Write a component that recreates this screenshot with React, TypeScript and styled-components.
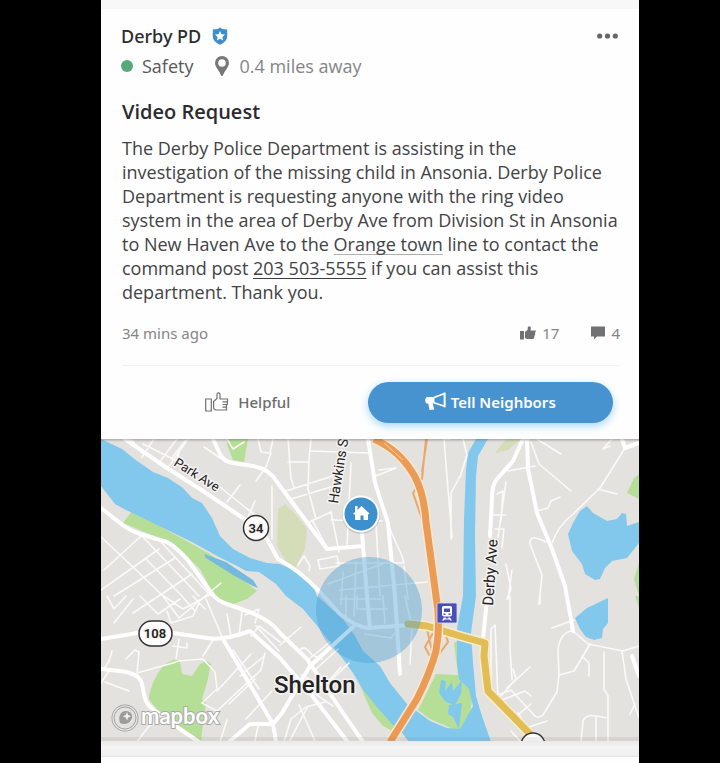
import React from "react";
import styled, { createGlobalStyle } from "styled-components";

const GlobalStyle = createGlobalStyle`
  * { box-sizing: border-box; }
  body {
    margin: 0;
    background: #000;
    font-family: "Open Sans", "Noto Sans", sans-serif;
    color: #434345;
  }
  button { font: inherit; border: 0; background: none; padding: 0; cursor: pointer; }
`;

const Page = styled.div`
  min-height: 100vh;
  display: flex;
  padding: 0 81px 0 101px;
`;

const Feed = styled.main`
  flex: 1;
  min-width: 0;
  display: flex;
  flex-direction: column;
  background: #fefefe;
`;

const Gap = styled.div<{ $size: number; $lower?: boolean }>`
  height: ${(p) => p.$size}px;
  background: ${(p) => (p.$lower ? "linear-gradient(#e9e9e9, #f4f4f4 40%, #f0f0f0)" : "#f8f8f8")};
  border-bottom: ${(p) => (p.$lower ? "1px solid #e4e4e4" : "0")};
`;

const Post = styled.article`
  display: flex;
  flex-direction: column;
  padding: 15px 19px 16px 20px;
`;

const Row = styled.div`
  display: flex;
  align-items: center;
`;

const Header = styled(Row)`
  height: 24px;
  justify-content: space-between;
`;

const Author = styled(Row)`
  gap: 11px;
  font-family: "Noto Sans", sans-serif;
  font-size: 18px;
  line-height: 24px;
  font-weight: 500;
  color: #2b2b2d;
`;

const MoreButton = styled.button`
  display: flex;
  padding: 8px 2px;
`;

const Details = styled(Row)`
  height: 24px;
  margin-top: 6px;
  font-size: 18px;
  line-height: 24px;
  color: #858587;
`;

const Dot = styled.span`
  width: 12px;
  height: 12px;
  margin-right: 9px;
  border-radius: 50%;
  background: #57aa78;
`;

const Category = styled.span`
  margin-right: 22px;
  color: #58585a;
`;

const Distance = styled(Row)`
  gap: 10px;
`;

const Content = styled.div`
  padding-left: 1px;
`;

const Title = styled.h1`
  margin: 20px 0 0;
  font-size: 20px;
  line-height: 28px;
  font-weight: 600;
  color: #2b2b2d;
`;

const Message = styled.p`
  margin: 10px 0 0;
  font-size: 18px;
  line-height: 24px;
  white-space: nowrap;
`;

const TextLink = styled.a<{ $soft?: boolean }>`
  color: inherit;
  text-decoration: underline;
  text-decoration-thickness: 1px;
  text-decoration-color: ${(p) => (p.$soft ? "#b0b0b0" : "#3c3c3e")};
  text-underline-offset: 3px;
  text-decoration-skip-ink: none;
`;

const Meta = styled(Row)`
  height: 24px;
  margin-top: 17px;
  justify-content: space-between;
  font-family: "Noto Sans", sans-serif;
  font-size: 15px;
  color: #858587;
`;

const Counts = styled(Row)`
  gap: 32px;
`;

const Count = styled(Row)`
  gap: 6px;
`;

const Actions = styled.div`
  display: grid;
  grid-template-columns: 1fr 1fr;
  margin-top: 20px;
  padding: 16px 7px 0 0;
  border-top: 1px solid #f2f2f2;
`;

const ActionButton = styled.button<{ $primary?: boolean }>`
  display: flex;
  align-items: center;
  justify-content: center;
  gap: ${(p) => (p.$primary ? 5 : 9)}px;
  height: 41px;
  border-radius: 21px;
  && {
    padding: 0 0 2px ${(p) => (p.$primary ? 0 : 6)}px;
    font-family: "Noto Sans", sans-serif;
    font-size: 15px;
    font-weight: ${(p) => (p.$primary ? 600 : 500)};
    color: ${(p) => (p.$primary ? "#fff" : "#6c6c6e")};
    background: ${(p) => (p.$primary ? "#4793d0" : "transparent")};
  }
  box-shadow: ${(p) => (p.$primary ? "0 3px 9px #a5d6f5" : "none")};
`;

const MapView = styled.svg`
  display: block;
  width: 100%;
  height: auto;
  background: #e4e2df;
`;

const Label = styled.text<{ $size: number; $weight?: number }>`
  font-family: Roboto, "Open Sans", sans-serif;
  font-size: ${(p) => p.$size}px;
  font-weight: ${(p) => p.$weight ?? 400};
  fill: #222;
  stroke: #f4f3f1;
  stroke-width: 3px;
  stroke-linejoin: round;
  paint-order: stroke;
`;

const Wordmark = styled.text`
  font-family: Lato, sans-serif;
  font-size: 22px;
  font-weight: 700;
  fill: #fff;
  stroke: #a9a9a7;
  stroke-width: 2px;
  paint-order: stroke;
`;

const ShieldIcon = () => (
  <svg width="16" height="18" viewBox="0 0 16 18" aria-hidden="true">
    <path d="M8 .4 10.4 2l4.8.5V9c0 4-2.500 6.700-7.200 8.700C3.300 15.700.8 13 .8 9V2.500L5.600 2z" fill="#3d8ecb" />
    <path d="m8 4 1.500 3.200 3.500.4-2.600 2.300.7 3.500L8 11.700l-3.100 1.700.7-3.500L3 7.600l3.500-.4z" fill="#fff" />
  </svg>
);

const PinIcon = () => (
  <svg width="14" height="20" viewBox="0 0 14 20" aria-hidden="true">
    <path fillRule="evenodd" d="M7 0a7 7 0 0 1 7 7c0 4-4.500 8-6 12.200Q7 21 6 19.200C4.500 15 0 11 0 7a7 7 0 0 1 7-7zm0 3.200a3.800 3.800 0 1 0 0 7.600 3.800 3.800 0 0 0 0-7.600z" fill="#777" />
  </svg>
);

const MoreIcon = () => (
  <svg width="21" height="6" viewBox="0 0 21 6" aria-hidden="true" fill="#666">
    <circle cx="2.700" cy="3" r="2.600" />
    <circle cx="10.500" cy="3" r="2.600" />
    <circle cx="18.300" cy="3" r="2.600" />
  </svg>
);

const LikeIcon = () => (
  <svg width="16" height="14" viewBox="0 0 16 14" aria-hidden="true" fill="#717173">
    <path d="M0 5h4v8.500H0zM5 6l2.500-2L8 .5h1.500c1 0 1.500.6 1.400 1.500L10.500 4.500H16L15 7l.3 1.500-1 1.500v1.500l-1 1.500H7L5 12z" />
  </svg>
);

const CommentIcon = () => (
  <svg width="14" height="14" viewBox="0 0 14 14" aria-hidden="true" fill="#717173">
    <path d="M.5.500h13a.5.5 0 0 1 .5.5v9.500H6L3 13.500v-3H0V1A.5.5 0 0 1 .5.500z" />
  </svg>
);

const HelpfulIcon = () => (
  <svg width="24" height="20" viewBox="0 0 24 20" aria-hidden="true" fill="none" stroke="#717173" strokeWidth="1.200">
    <path d="M.7 7h5.600v12H.7zM8.600 16.500V9.500L12 6.500V2.200C12 .4 14.800.3 15 2.200V7h8.200M8.600 16.500 10.500 18h11v-2.800M17.500 9.800h5V7M17.500 12.500h4.800V9.800M17.500 15.200h4v-2.700" />
  </svg>
);

const MegaphoneIcon = () => (
  <svg width="21" height="19" viewBox="0 0 21 19" aria-hidden="true">
    <path d="M9 5.500 19.500 1.500v12.800L9 10.800" fill="none" stroke="#fff" strokeWidth="1.600" strokeLinejoin="round" />
    <path d="M1.500 5H9.500v6l-1.800.6 1.500 6-4.700.4-1.200-6.300L1 11.200 0 8z" fill="#fff" />
    <path d="M19.700.4v15" stroke="#fff" strokeWidth="1.600" />
  </svg>
);

const majorRoads = [
  "M24 0 66 29 99 50 142 79 Q158 88 166 100 L177 120 Q198 131 219 153 L239 175 Q255 188 267 189 L309 186",
  "M0 69 19 84 Q28 91 39 95 L66 103 Q75 108 86 120 L112 156 Q117 162 126 165 L146 172 Q170 181 179 194 L206 220 242 274 262 303",
  "M0 200 36 194H72L106 199 Q122 202 149 192 L179 219 209 254 246 302",
  "M0 230 19 232Q36 234 40 242C44 252 41 263 52 270L79 290 98 303",
  "M122 200 172 285 175 303M129 302 149 285H172L181 274 209 227 252 188",
  "M112 0 119 15Q123 23 132 24L152 27Q169 30 176 43L226 110 262 107",
  "M267 0 274 44 287 84 294 157 299 235M261 94 266 157 269 189",
  "M422 0 412 22 396 40Q391 45 391 60L389 97M386 160 382 200",
  "M426 0 427 30 436 74 451 110 464 147 472 192",
  "M521 0 524 9 538 4M531 217 538 237",
];

const minorRoads = [
  "M30 0 41 14M53 0 41 18M76 0 57 25M87 0 66 30M42 5 76 22 78 14M70 20 84 2",
  "M126 0 132 10 143 3M157 0 160 13 169 14 172 0M170 14 165 28 155 42M119 19 103 8",
  "M139 46 126 63M154 62 147 78M119 48 145 69 165 84M171 47V100",
  "M0 98 32 128 62 157 78 179M3 131 40 97M0 151 58 110M13 157 74 119M32 174 91 135M42 98 98 157M44 119 80 156 94 172M60 103 110 157M78 179 120 144",
  "M6 157 13 170 25 157M13 184 32 160M39 157 57 175 79 160M63 157 82 170 112 154M66 172 70 184 92 177 98 164M92 157 104 170M105 160 122 200M126 175 130 197M141 172 138 197",
  "M11 212 8 222 3 230M25 220 34 211 38 213 36 234 72 224 77 222 102 220 114 233 116 250 101 264M78 200 75 220M72 207 86 209V204M102 217 112 201",
  "M4 243 28 252M0 244 8 232M36 303 48 287 65 279M101 264 116 272 160 231 164 214M116 252 150 215M139 237 162 218M128 265 154 240M145 280 171 252M132 211 158 250",
  "M155 187 178 212M150 197 158 187 179 203M144 176 158 170 154 184M119 303 126 281M154 302 157 287M188 303 206 269",
  "M183 303 190 280 205 268 224 263M198 266 214 302M210 252 232 267M200 236 223 247 240 228M179 206 200 188M208 220 229 203M214 231 237 210M224 247 248 224M199 211Q203 205 211 216L221 220",
  "M187 0 190 40 193 48M210 0 208 20 207 50 215 80M187 23H208M210 12 267 14M185 52 235 36M190 60 230 48M206 84 230 73 238 113M211 81 227 110M250 24 246 105M230 81 281 82M275 37 295 29M278 31 294 29",
  "M197 126 203 117 209 127 208 132M217 121 236 117 238 127 219 130ZM235 124H303L301 117 287 86M275 84 279 157M238 151 326 143M242 133 240 165M255 123 253 177M227 145 284 124M303 127 307 160",
  "M245 157V179M282 157 284 184M304 157 311 188 309 225M256 157V170H286M264 195 290 199 295 193M239 160H280",
  "M362 0 366 16 359 38M349 0H343L347 50 351 98M359 37 350 54V100",
  "M436 0 460 15M430 3 438 25 470 52M434 27 407 32M436 72 447 69 450 62 459 58M445 103Q428 94 429 105L441 136 438 165M405 43 397 98M396 55 402 52 400 82M392 76H405M394 90H403L401 109M405 125 410 150 406 160M411 131 407 160",
  "M509 7 502 10 511 0M524 9 499 49 472 75Q457 87 451 104M497 50 516 55M451 189 473 181M472 192 487 205 522 212 538 207",
  "M472 192Q460 192 457 210L458 236 456 253 442 276Q436 281 432 275L410 251 397 256M458 236 473 232 489 205M481 217 488 224V237M409 157V210L411 241M412 230 415 240 400 257M429 228 406 249M390 258 390 190 394 186 397 260M398 262 424 252 430 257M412 280 430 265M419 291 446 282M417 274 428 292M410 292 420 303",
  "M480 303 482 282Q485 275 495 277L507 279M503 213V250L507 257V303M495 277V303M521 212 525 240 538 279M529 275 534 265M439 157V165",
];

const DerbyMap = () => (
  <MapView viewBox="0 0 538 302" role="img" aria-label="Map of Shelton and Derby">
    <defs>
      <linearGradient id="mapEdge" x1="0" y1="0" x2="0" y2="1">
        <stop offset="0" stopColor="#555" stopOpacity="0.400" />
        <stop offset="1" stopColor="#555" stopOpacity="0" />
      </linearGradient>
    </defs>
    <rect width="538" height="302" fill="#e4e2df" />
    <g fill="#b5df97">
      <path d="M126 0h21l-4 23-11-2-6-15z" />
      <path d="m22 84 9-12 51 28 27 15 23 17 24 20-10 8-14 5-16-4-17-31-27-26-26-10z" />
      <path d="M48 260c1-13 10-31 18-36l8-4 5 2 2 13 10 2 8-12 7-3 4 3-4 19-5 16 4 4-3 20-2 19-9-3-12-11-22-17z" />
      <path d="m254 235 17 39 11 13 14 7 4-8-21-28-17-28z" />
      <path d="m335 235 22 1-4-32 8-5 3 36 8 20-4 25-5 13-11-3-23-10-12-9z" />
      <path d="m538 35-5 4-7 15 12 6zM538 124l-5 16 5 17zM534 157l4 12v-12z" />
    </g>
    <path d="m177 70 7-5 12 12 10 13-2 20-10 19-8-5-10-17zM405 0h15l-13 11-13 3z" fill="#d5dcb8" />
    <g fill="#82c8ed">
      <path d="m0 0 21 10 15 12 16 11 15 6 15 10 9 10 10 5 10 15 8 18 13 13 17 9 17 5 13 1 20 9 13 13 4 10 26 23 12 17 8 15 17 15 10 17 17 21 23 17 17 7 13 1 13-23-4-17-10-10-2-17V190l6-33 1-77 2-50 2-16 8-14h12l-10 17-2 20-1 60 1 60-5 37 2 30 3 33 5 17 10 29h-82l-6-8-12-11-15-17-12-15-11-18-10-14-10-13-14-18-16-19-17-13-10-12-17-12-13-1-7-4-20-10-27-15-33-16-35-17-9-5L0 47z" />
      <path d="m486 67 6 7 14 8 10-2 5-6 4 1 1 12 12-4v21l-12 15-15 3-7 7-5 11-5 1-10-6-3-10-10-13-4-17 5-11 7-12z" />
      <path d="m474 179 12-10 21-10v25l-5 6-1 9-8 2-8-3-6-8z" />
      <path d="m340 241 5 1-1 10 7-9 1 9 9-11-1 14-6 11-9-3-7-9zM348 266l13-2-3 26-6-12-5-3z" />
      <path d="m103 115 22 8 27 18 5 8-5-2-20-11-27-17z" fill="#75b9df" />
    </g>
    <g fill="none" stroke="#fbfaf9" strokeLinejoin="round" strokeLinecap="round">
      {minorRoads.map((d) => <path key={d} d={d} strokeWidth="1.600" />)}
      {majorRoads.map((d) => <path key={d} d={d} strokeWidth="4" stroke="#fff" />)}
    </g>
    <g fill="none" strokeLinejoin="round">
      <path d="M325 0 321 40 312 54 321 80M326 0 321 33M336 187 324 208 333 225M326 190 331 212M341 184 347 203 336 218" stroke="#eaa86a" strokeWidth="2" />
      <path d="M307 185 326 187 359 197 384 204 383 217 387 252 428 294" stroke="#f7edcb" strokeWidth="10" />
      <path d="M307 185 326 187 359 197 384 204 383 217 387 252 428 294" stroke="#e2bd55" strokeWidth="7" strokeLinecap="round" />
      <path d="M273 0Q300 12 314 38 323 55 325 83L335 157Q340 184 335 212 329 234 316 260L289 303" stroke="#fbe6cf" strokeWidth="10" />
      <path d="M273 0Q300 12 314 38 323 55 325 83L335 157Q340 184 335 212 329 234 316 260L289 303" stroke="#ea9c56" strokeWidth="7" />
      <path d="M283 4 302 21" stroke="#f6cfa8" />
    </g>
    <circle cx="268" cy="171" r="53" fill="#4a9fd5" fillOpacity="0.420" />
    <Label $size={13} transform="translate(72 26) rotate(32)">Park Ave</Label>
    <Label $size={14} transform="translate(237 65) rotate(-81)">Hawkins St</Label>
    <Label $size={15} transform="translate(392 167) rotate(-86)">Derby Ave</Label>
    <Label $size={24} $weight={500} x="173" y="254">Shelton</Label>
    <g fill="#fff" stroke="#333" strokeWidth="1.500">
      <circle cx="155" cy="89" r="12.500" />
      <rect x="38" y="182" width="33" height="25" rx="12.500" />
      <circle cx="432" cy="306" r="12" />
    </g>
    <Label $size={13} $weight={600} x="155" y="94" textAnchor="middle">34</Label>
    <Label $size={13} $weight={600} x="54" y="199" textAnchor="middle">108</Label>
    <circle cx="260" cy="76" r="19" fill="#777" fillOpacity="0.300" />
    <circle cx="260" cy="75" r="18.500" fill="#fff" />
    <circle cx="260" cy="75" r="16.500" fill="#3e90cd" />
    <path d="m252 75 2-2v-6h2.500v4l4-4 8 7.500-1.500 1V81h-4.500v-4.500h-3V81H254v-5.500z" fill="#fff" />
    <rect x="336" y="164" width="20" height="20" rx="1.500" fill="#4850b8" stroke="#dedff3" strokeWidth="0.800" />
    <path fillRule="evenodd" d="M342.500 167h7q1.500 0 1.500 1.500v7q0 2-2 2h-6q-2 0-2-2v-7q0-1.500 1.500-1.500zm.5 2.500v3.500h6v-3.500zm-.5 5v1.500h2v-1.500zm5 0v1.500h2v-1.500zM343 178.500h2l-.5 1h3l-.5-1h2l2 3h-2l-.5-1h-5l-.5 1h-2z" fill="#fff" />
    <g>
      <circle cx="24" cy="279" r="12" fill="#e4e2df" fillOpacity="0.700" stroke="#a3a3a1" strokeWidth="3" />
      <circle cx="24" cy="279" r="12" fill="none" stroke="#e9e9e7" strokeWidth="1.200" />
      <path d="M19 284c-2-6 0-12 6-12 5 0 8 5 5 9-2 4-7 5-11 3z" fill="#9c9c9a" />
      <path d="m26 273 1.200 3 3 1.200-3 1.200-1.200 3-1.200-3-3-1.200 3-1.200z" fill="#efefed" />
      <Wordmark x="40" y="285">mapbox</Wordmark>
    </g>
    <rect width="538" height="3" fill="url(#mapEdge)" />
    <rect y="298" width="538" height="4" fill="#777" fillOpacity="0.120" />
  </MapView>
);

export default function App() {
  return (
    <>
      <GlobalStyle />
      <Page>
        <Feed>
          <Gap $size={9} />
          <Post>
            <Header>
              <Author>Derby PD <ShieldIcon /></Author>
              <MoreButton type="button" aria-label="More options"><MoreIcon /></MoreButton>
            </Header>
            <Details>
              <Dot />
              <Category>Safety</Category>
              <Distance><PinIcon />0.4 miles away</Distance>
            </Details>
            <Content>
              <Title>Video Request</Title>
              <Message>
                The Derby Police Department is assisting in the<br />
                investigation of the missing child in Ansonia. Derby Police<br />
                Department is requesting anyone with the ring video<br />
                system in the area of Derby Ave from Division St in Ansonia<br />
                to New Haven Ave to the <TextLink $soft href="#orange">Orange town</TextLink> line to contact the<br />
                command post <TextLink href="tel:2035035555">203 503-5555</TextLink> if you can assist this<br />
                department. Thank you.
              </Message>
              <Meta>
                <span>34 mins ago</span>
                <Counts>
                  <Count><LikeIcon />17</Count>
                  <Count><CommentIcon />4</Count>
                </Counts>
              </Meta>
              <Actions>
                <ActionButton type="button"><HelpfulIcon />Helpful</ActionButton>
                <ActionButton type="button" $primary><MegaphoneIcon />Tell Neighbors</ActionButton>
              </Actions>
            </Content>
          </Post>
          <DerbyMap />
          <Gap $size={16} $lower />
        </Feed>
      </Page>
    </>
  );
}
